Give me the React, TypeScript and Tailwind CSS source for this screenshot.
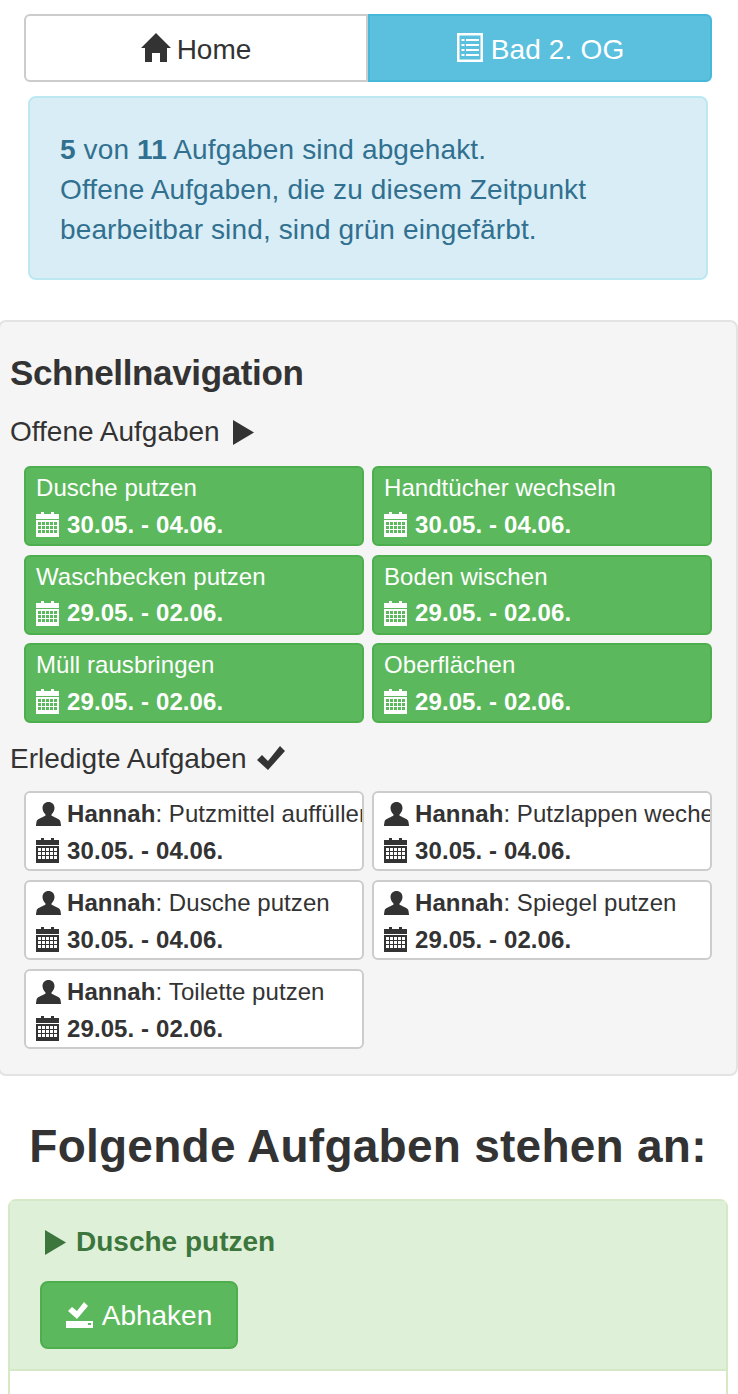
const CalendarIcon = ({ done }: { done?: boolean }) => (
    <svg width="23" height="25" viewBox="0 0 23 25" className="mr-[8px] inline-block shrink-0 fill-current">
        <path d="M0 2h5V0h3v2h7V0h3v2h5v5H0zM0 8h23v17H0z" />
        <path
            className={done ? 'fill-white' : 'fill-[#5cb85c]'}
            d="M2 10h3v3H2zM6 10h3v3H6zM10 10h3v3h-3zM14 10h3v3h-3zM18 10h3v3h-3zM2 14h3v3H2zM6 14h3v3H6zM10 14h3v3h-3zM14 14h3v3h-3zM18 14h3v3h-3zM2 18h3v3H2zM6 18h3v3H6zM10 18h3v3h-3zM14 18h3v3h-3zM18 18h3v3h-3z"
        />
    </svg>
);

const UserIcon = () => (
    <svg width="25" height="24" viewBox="0 0 25 24" className="mr-[6px] inline-block shrink-0 fill-current">
        <path d="M12.5 0c3.600 0 6 2.600 6 6 0 2.600-1.300 4.800-2.800 6.200-.4.5-.3 1.400.4 1.800 3 1.600 7.800 3 8.300 5.500.2 1.200.6 3 .6 4.500H0c0-1.500.4-3.300.6-4.500.5-2.500 5.300-3.900 8.300-5.500.7-.4.8-1.300.4-1.800C7.800 10.800 6.500 8.600 6.500 6c0-3.400 2.400-6 6-6z" />
    </svg>
);

const PlayIcon = ({ className }: { className: string }) => (
    <svg viewBox="0 0 21 25" className={`inline-block fill-current ${className}`}>
        <path d="M0 0l21 12.500L0 25z" />
    </svg>
);

const Chip = ({
    title,
    who,
    date,
    done,
}: {
    title: string;
    who?: string;
    date: string;
    done?: boolean;
}) => (
    <div
        className={`h-[80px] overflow-hidden whitespace-nowrap rounded-[6px] border-2 px-[10px] text-[24px] leading-[36px] ${
            done
                ? 'border-[#ccc] bg-white pt-[3px] text-[#333]'
                : 'border-[#4cae4c] bg-[#5cb85c] pt-[2px] text-white'
        }`}
    >
        <div className="flex h-[36px] items-center tracking-[0.06px]">
            {who && <UserIcon />}
            {who && <b>{who}</b>}
            {who && <span>:&nbsp;</span>}
            <span>{title}</span>
        </div>
        <div className="flex h-[37px] items-center font-bold tracking-[0.1px]">
            <CalendarIcon done={done} />
            {date}
        </div>
    </div>
);

const openTasks = [
    ['Dusche putzen', '30.05. - 04.06.'],
    ['Handtücher wechseln', '30.05. - 04.06.'],
    ['Waschbecken putzen', '29.05. - 02.06.'],
    ['Boden wischen', '29.05. - 02.06.'],
    ['Müll rausbringen', '29.05. - 02.06.'],
    ['Oberflächen', '29.05. - 02.06.'],
];

const doneTasks = [
    ['Putzmittel auffüllen', '30.05. - 04.06.'],
    ['Putzlappen wecheseln', '30.05. - 04.06.'],
    ['Dusche putzen', '30.05. - 04.06.'],
    ['Spiegel putzen', '29.05. - 02.06.'],
    ['Toilette putzen', '29.05. - 02.06.'],
];

export default function App() {
    return (
        <div className="h-[1394px] overflow-hidden bg-white font-['Liberation_Sans',Arial,sans-serif] text-[28px] leading-[40px] text-[#333]">
            <div className="mx-[24px] flex pt-[14px]">
                <div className="flex h-[68px] w-[344px] items-center justify-center gap-[6px] rounded-l-[6px] border-2 border-[#ccc] bg-white pt-[3px]">
                    <svg width="30" height="29" viewBox="0 0 30 29" className="mb-[4px] fill-[#333]">
                        <path d="M15 0l15 15h-4v14h-7V20h-8v9H4V15H0z" />
                    </svg>
                    Home
                </div>
                <div className="flex h-[68px] w-[344px] items-center justify-center gap-[8px] rounded-r-[6px] border-2 border-[#46b8da] bg-[#5bc0de] pl-[1px] pt-[3px] tracking-[0.15px] text-white">
                    <svg width="26" height="29" viewBox="0 0 26 29" className="mb-[4px] fill-white">
                        <path
                            fillRule="evenodd"
                            d="M0 0h26v29H0zM2.500 2.500v24h21v-24zM4.500 6h3v2h-3zM9 6h13v2H9zM4.500 11h3v2h-3zM9 11h13v2H9zM4.500 16h3v2h-3zM9 16h13v2H9zM4.500 21h3v2h-3zM9 21h13v2H9z"
                        />
                    </svg>
                    Bad 2. OG
                </div>
            </div>

            <div className="ml-[28px] mr-[30px] mt-[14px] h-[184px] rounded-[8px] border-2 border-[#bce8f1] bg-[#d9edf7] px-[30px] py-[32px] tracking-[0.13px] text-[#31708f]">
                <b>5</b> von <b>11</b> Aufgaben sind abgehakt.
                <br />
                Offene Aufgaben, die zu diesem Zeitpunkt
                <br />
                bearbeitbar sind, sind grün eingefärbt.
            </div>

            <div className="-ml-[2px] mt-[40px] h-[756px] rounded-[8px] border-2 border-[#e3e3e3] bg-[#f5f5f5] px-[10px]">
                <h3 className="mt-[31px] text-[35px] font-bold leading-[40px] tracking-[-0.35px]">Schnellnavigation</h3>
                <div className="mt-[19px] flex items-center">
                    Offene Aufgaben
                    <PlayIcon className="ml-[13px] h-[25px] w-[21px]" />
                </div>
                <div className="mt-[14px] grid grid-cols-[340px_340px] gap-x-[8px] gap-y-[8.500px] pl-[14px]">
                    {openTasks.map(([title, date]) => (
                        <Chip key={title} title={title} date={date} />
                    ))}
                </div>
                <div className="mt-[16px] flex items-center">
                    Erledigte Aufgaben
                    <svg width="28" height="24" viewBox="0 0 28 24" className="ml-[10px] mb-[2px] fill-[#333]">
                        <path d="M0 14l5-5 6 6L23 0l5 5-17 19z" />
                    </svg>
                </div>
                <div className="mt-[12px] grid grid-cols-[340px_340px] gap-x-[8px] gap-y-[9px] pl-[14px]">
                    {doneTasks.map(([title, date]) => (
                        <Chip key={title} who="Hannah" title={title} date={date} done />
                    ))}
                </div>
            </div>

            <h1 className="mt-[44px] pr-[2px] text-center text-[46px] font-bold leading-[52px] tracking-[0.25px]">
                Folgende Aufgaben stehen an:
            </h1>

            <div className="ml-[8px] mr-[10px] mt-[27px] h-[300px] rounded-t-[8px] border-2 border-[#d6e9c6] bg-white">
                <div className="h-[170px] border-b-2 border-[#d6e9c6] bg-[#dff0d8] px-[30px] pt-[21px] text-[#3c763d]">
                    <div className="flex items-center font-bold">
                        <PlayIcon className="ml-[5px] mr-[10px] h-[25px] w-[21px]" />
                        Dusche putzen
                    </div>
                    <div className="mt-[19px] flex h-[68px] w-[198px] items-center justify-center gap-[9px] rounded-[8px] border-2 border-[#4cae4c] bg-[#5cb85c] pt-[1px] text-white">
                        <svg width="27" height="26" viewBox="0 0 27 26" className="mb-[1px] fill-white">
                            <path fillRule="evenodd" d="M0 19h27v7H0zM22 21v2h3v-2z" />
                            <path d="M2 9l4-4 5 4 7-9 4 4-11 13z" />
                        </svg>
                        Abhaken
                    </div>
                </div>
            </div>
        </div>
    );
}
